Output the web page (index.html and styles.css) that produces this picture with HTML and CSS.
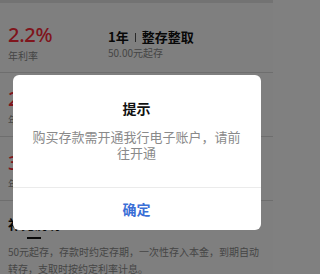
FILE: index.html
```html
<!DOCTYPE html>
<html lang="zh-CN">
<head>
<meta charset="utf-8">
<link rel="stylesheet" href="styles.css">
</head>
<body>
<div class="page">
  <div class="topbar"></div>
  <div class="list">
    <div class="item first">
      <div class="rate-col">
        <div class="rate">2.2%</div>
        <div class="label">年利率</div>
      </div>
      <div class="info-col">
        <div class="title">1年<span class="sep"></span>整存整取</div>
        <div class="sub">50.00元起存</div>
      </div>
    </div>
    <div class="item">
      <div class="rate-col">
        <div class="rate">2.6%</div>
        <div class="label">年利率</div>
      </div>
      <div class="info-col">
        <div class="title">2年<span class="sep"></span>整存整取</div>
        <div class="sub">50.00元起存</div>
      </div>
    </div>
    <div class="item">
      <div class="rate-col">
        <div class="rate">3.2%</div>
        <div class="label">年利率</div>
      </div>
      <div class="info-col">
        <div class="title">3年<span class="sep"></span>整存整取</div>
        <div class="sub">50.00元起存</div>
      </div>
    </div>
  </div>
  <div class="tabs">
    <div class="tab active">补充说明</div>
  </div>
  <p class="desc">50元起存，存款时约定存期，一次性存入本金，到期自动转存，支取时按约定利率计息。</p>

  <div class="overlay">
    <div class="modal">
      <div class="modal-title">提示</div>
      <div class="modal-msg">购买存款需开通我行电子账户，请前往开通</div>
      <div class="modal-foot">确定</div>
    </div>
  </div>
</div>
</body>
</html>
```
FILE: styles.css
```css
* { box-sizing: border-box; }
html, body { margin: 0; padding: 0; }
html { background: #808080; }
body {
  font-family: "Noto Sans CJK SC", "Noto Sans", sans-serif;
  color: #222;
}
.page {
  position: relative;
  width: 273px;
  height: 274px;
  overflow: hidden;
  background: #fff;
}
.topbar { height: 3px; background: #e6e6e6; }
.list { padding-top: 6px; }
.item {
  display: flex;
  height: 64px;
  border-bottom: 1px solid #dcdcdc;
}
.rate-col { width: 108px; padding: 14px 0 0 8px; }
.rate {
  font-family: "Noto Sans", sans-serif;
  font-size: 20px;
  line-height: 24px;
  font-weight: 500;
  color: #ff2a38;
  letter-spacing: -0.3px;
}
.label { margin-top: 2px; font-size: 10px; line-height: 14px; color: #8c8c8c; }
.info-col { padding-top: 19px; }
.title {
  font-size: 13px;
  line-height: 18px;
  font-weight: 700;
  color: #111;
  display: flex;
  align-items: center;
}
.sep {
  display: inline-block;
  width: 1px;
  height: 9px;
  background: #555;
  margin: 0 6px;
}
.sub { font-size: 10px; line-height: 14px; color: #8c8c8c; }
.tabs { display: flex; padding: 14px 0 0 8px; }
.tab {
  font-size: 13px;
  line-height: 18px;
  font-weight: 700;
  color: #111;
  display: flex;
  flex-direction: column;
  align-items: center;
}
.tab.active::after {
  content: "";
  width: 14px;
  height: 2px;
  margin-top: 4px;
  background: #111;
}
.desc {
  margin: 4px 0 0;
  padding: 0 8px;
  font-size: 10px;
  line-height: 17px;
  color: #8c8c8c;
}
.overlay {
  position: absolute;
  inset: 0;
  background: rgba(0, 0, 0, 0.5);
  display: flex;
  justify-content: center;
  align-items: flex-start;
  padding-top: 75px;
}
.modal {
  width: 248px;
  background: #fff;
  border-radius: 6px;
  overflow: hidden;
  text-align: center;
}
.modal-title {
  padding-top: 23px;
  font-size: 14px;
  line-height: 20px;
  font-weight: 700;
  color: #111;
}
.modal-msg {
  margin: 11px 0 26px;
  padding: 0 20px;
  font-size: 13px;
  line-height: 16px;
  color: #8a8a8a;
}
.modal-foot {
  height: 43px;
  border-top: 1px solid #ebebeb;
  font-size: 14px;
  line-height: 42px;
  font-weight: 700;
  color: #3b6fd6;
}
```
